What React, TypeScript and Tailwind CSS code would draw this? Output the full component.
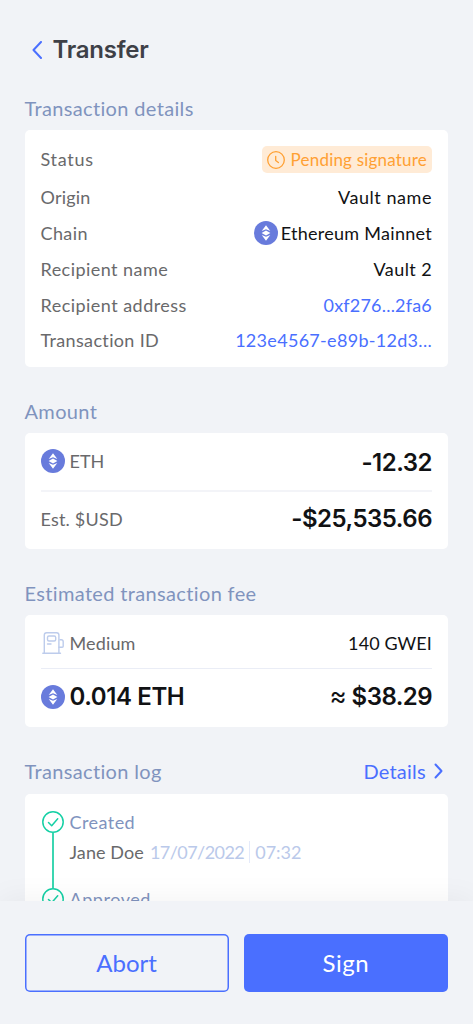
import type { ReactNode } from "react";

const detailRows = [
  { label: "Origin", value: "Vault name", labelClass: "tracking-[0.2px]", valueClass: "text-[#111214] tracking-[0.55px]" },
  { label: "Chain", value: "Ethereum Mainnet", labelClass: "tracking-[0.4px]", valueClass: "text-[#111214] tracking-[0.28px]", eth: true },
  { label: "Recipient name", value: "Vault 2", labelClass: "tracking-[0.45px]", valueClass: "text-[#111214] tracking-[0.4px]" },
  { label: "Recipient address", value: "0xf276...2fa6", labelClass: "tracking-[0.47px]", valueClass: "text-[#4a6fff] tracking-[0.2px]" },
  { label: "Transaction ID", value: "123e4567-e89b-12d3...", labelClass: "tracking-[0.35px]", valueClass: "text-[#4a6fff] tracking-[0.3px]" },
];

function EthIcon() {
  return (
    <svg viewBox="0 0 24 24" className="h-6 w-6 shrink-0">
      <circle cx="12" cy="12" r="12" fill="#687bdc" />
      <g fill="#fff">
        <path d="M12 4.2 16.3 9.9 12 8.3 7.7 9.9Z" />
        <path d="M12 9.6 16.4 12 12 14.4 7.6 12Z" />
        <path d="M12 19.8 16.3 14.1 12 15.7 7.7 14.1Z" />
      </g>
    </svg>
  );
}

function ClockIcon() {
  return (
    <svg viewBox="0 0 18 18" className="h-[18px] w-[18px]" fill="none" stroke="#ffa033" strokeLinecap="round" strokeLinejoin="round">
      <circle cx="9" cy="9" r="8.3" strokeWidth="1.3" />
      <path d="M8.7 5.3v4.2l2.7 2" strokeWidth="1.3" />
    </svg>
  );
}

function PumpIcon() {
  return (
    <svg viewBox="0 0 24 24" className="h-6 w-6 shrink-0" fill="none" stroke="#bdccec" strokeWidth="1.4" strokeLinecap="round" strokeLinejoin="round">
      <path d="M1.8 22.2h17.7M3.3 22V4a2.3 2.3 0 0 1 2.3-2.3h10A2.3 2.3 0 0 1 17.9 4v18" />
      <rect x="6.5" y="5" width="8.2" height="5" rx="1.5" />
      <path d="M6.5 13h3.5M19 8.7h1.2a2 2 0 0 1 2 2v4.6a1 1 0 0 1-1 1h-3.3" />
    </svg>
  );
}

function CheckIcon() {
  return (
    <svg viewBox="0 0 22 22" className="h-[22px] w-[22px] shrink-0" fill="none" stroke="#15d0a5" strokeWidth="1.5" strokeLinecap="round" strokeLinejoin="round">
      <circle cx="11" cy="11" r="10.2" />
      <path d="m6.5 11.5 3.2 3.2 6-6.9" />
    </svg>
  );
}

function SectionTitle({ children }: { children: ReactNode }) {
  return <h2 className="text-[20px] leading-7 tracking-[0.35px] text-[#8093be]">{children}</h2>;
}

export default function App() {
  return (
    <div className="flex h-[1024px] w-[473px] flex-col overflow-hidden bg-[#f1f3f7] font-['Lato','Noto_Sans',sans-serif] text-[18px] leading-6 text-[#69696b]">
      <main className="h-[901px] overflow-hidden pr-[25px] pl-[24.5px]">
        <header className="mt-9 flex h-7 items-center gap-2.5 pl-[7px]">
          <svg viewBox="0 0 11 18" className="h-[18px] w-[11px]" fill="none" stroke="#4a6fff" strokeWidth="2" strokeLinecap="round" strokeLinejoin="round">
            <path d="M9 1 1.5 9 9 17" />
          </svg>
          <h1 className="font-['Inter',sans-serif] text-[24px] font-semibold tracking-[-0.25px] text-[#3e4047]">Transfer</h1>
        </header>

        <section className="mt-[30px]">
          <SectionTitle>Transaction details</SectionTitle>
          <div className="mt-2 h-[237px] rounded-[5px] bg-white px-4 pt-4">
            <div className="flex h-[27px] items-center justify-between">
              <span className="pb-0.5 tracking-[0.7px]">Status</span>
              <span className="flex h-[27px] items-center gap-1.5 rounded-[5px] bg-[#ffebd6] px-[5px] text-[17px] tracking-[0.2px] text-[#ffa033]">
                <ClockIcon />
                Pending signature
              </span>
            </div>
            <div className="pt-[5.8px]">
              {detailRows.map((row) => (
                <div
                  key={row.label}
                  className={`flex items-center justify-between ${row.eth ? "h-[37px]" : "h-[35.5px]"}`}
                >
                  <span className={row.labelClass}>{row.label}</span>
                  <span className={`flex items-center gap-[3px] ${row.valueClass}`}>
                    {row.eth && <EthIcon />}
                    {row.value}
                  </span>
                </div>
              ))}
            </div>
          </div>
        </section>

        <section className="mt-[30px]">
          <SectionTitle>Amount</SectionTitle>
          <div className="mt-2 h-[116px] rounded-[5px] bg-white px-4">
            <div className="flex h-[59px] items-center justify-between border-b-2 border-[#f3f4f8]">
              <span className="flex items-center gap-[5px] pb-0.5">
                <EthIcon />
                ETH
              </span>
              <span className="pt-0.5 font-['Inter',sans-serif] text-[24px] font-semibold tracking-[-0.5px] text-[#111214]">-12.32</span>
            </div>
            <div className="flex h-[55px] items-center justify-between">
              <span className="pb-0.5 tracking-[0.2px]">Est. $USD</span>
              <span className="pb-0.5 font-['Inter',sans-serif] text-[24px] font-semibold tracking-[-0.5px] text-[#111214]">-$25,535.66</span>
            </div>
          </div>
        </section>

        <section className="mt-[30px]">
          <SectionTitle>Estimated transaction fee</SectionTitle>
          <div className="mt-2 h-[112px] rounded-[5px] bg-white px-4">
            <div className="flex h-[54px] items-center justify-between border-b border-[#eaedf6]">
              <span className="flex items-center gap-[5px] pt-0.5 tracking-[0.15px]">
                <PumpIcon />
                Medium
              </span>
              <span className="pt-0.5 tracking-[0.1px] text-[#111214]">140 GWEI</span>
            </div>
            <div className="flex h-[55px] items-center justify-between font-['Inter',sans-serif] text-[24px] font-semibold tracking-[-0.4px] text-[#111214]">
              <span className="flex items-center gap-[5px]">
                <EthIcon />
                0.014 ETH
              </span>
              <span className="tracking-[-0.55px]">
                <span className="text-[26px] font-normal">≈</span> $38.29
              </span>
            </div>
          </div>
        </section>

        <section className="mt-[30px]">
          <div className="flex items-center justify-between">
            <SectionTitle>Transaction log</SectionTitle>
            <a className="flex items-center gap-2 pr-[5px] text-[20px] tracking-[0.25px] text-[#4a6fff]">
              Details
              <svg viewBox="0 0 9 16" className="h-4 w-[9px]" fill="none" stroke="#4a6fff" strokeWidth="2" strokeLinecap="round" strokeLinejoin="round">
                <path d="M1.5 1.5 7.5 8l-6 6.5" />
              </svg>
            </a>
          </div>
          <div className="mt-[8.5px] h-[237px] rounded-[5px] bg-white px-[17px] pt-[17px]">
            <div className="flex gap-[6px]">
              <div className="flex h-[77px] flex-col items-center">
                <CheckIcon />
                <div className="w-[2px] flex-1 bg-[#3bd6b1]" />
              </div>
              <div>
                <div className="-mt-px tracking-[0.45px] text-[#8093be]">Created</div>
                <div className="mt-1.5 flex items-center">
                  <span className="tracking-[0.1px]">Jane Doe</span>
                  <span className="ml-1.5 tracking-[-0.55px] text-[#bac9ea]">17/07/2022</span>
                  <span className="mx-[5px] h-[22px] w-px bg-[#e4eafa]" />
                  <span className="text-[#bac9ea]">07:32</span>
                </div>
              </div>
            </div>
            <div className="flex gap-[6px]">
              <CheckIcon />
              <div className="-mt-px tracking-[0.55px] text-[#8093be]">Approved</div>
            </div>
          </div>
        </section>
      </main>

      <footer className="relative flex h-[123px] items-start gap-[15px] bg-[#f1f3f7] pt-[33px] pr-[25px] pl-[24.5px] text-[24px] shadow-[0_0_30px_rgba(0,0,0,0.06)]">
        <button className="h-[58px] flex-1 rounded-[5px] text-[#4a6fff] shadow-[inset_0_0_0_1.5px_#4a6fff]">Abort</button>
        <button className="h-[58px] flex-1 rounded-[5px] bg-[#4a6fff] tracking-[0.5px] text-white">Sign</button>
      </footer>
    </div>
  );
}
